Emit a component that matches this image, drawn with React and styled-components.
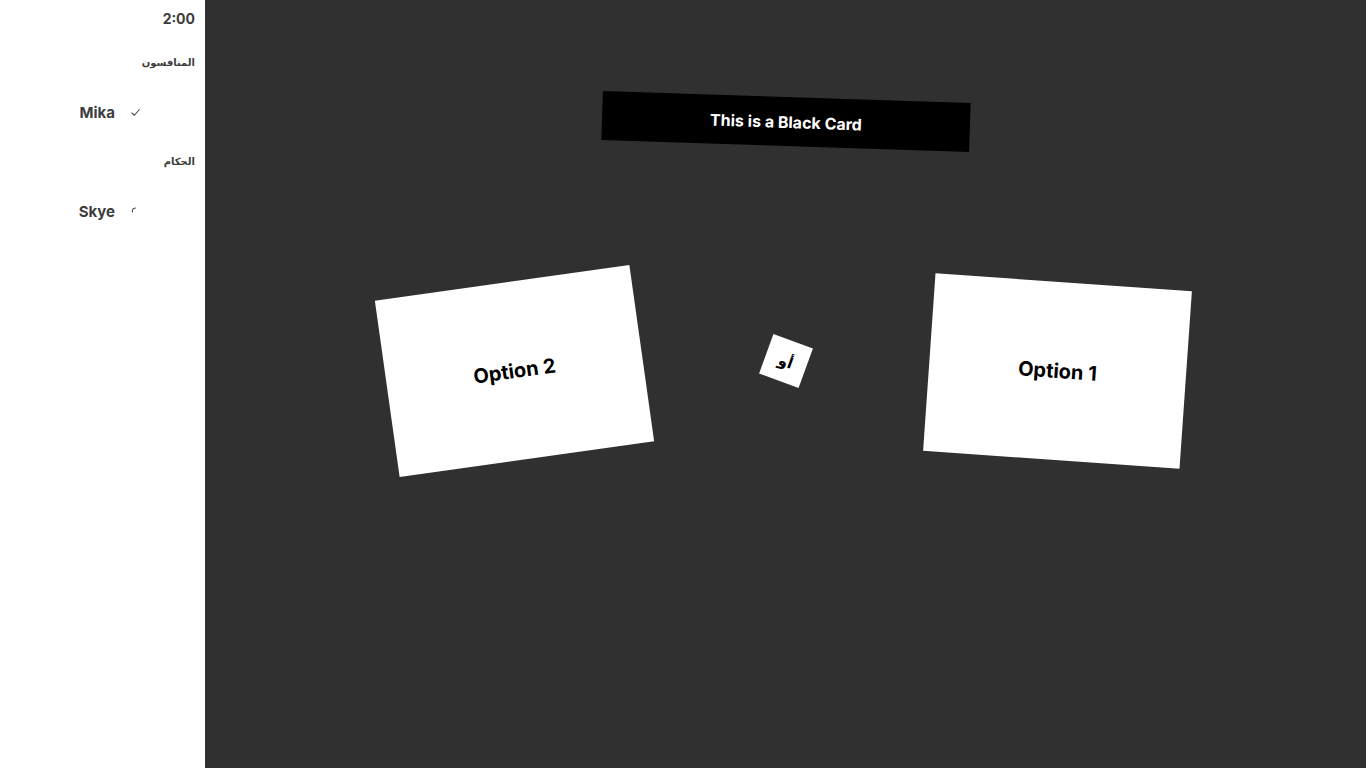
import React from "react";
import styled, { createGlobalStyle } from "styled-components";

const GlobalStyle = createGlobalStyle`
  html, body, #root {
    margin: 0;
    height: 100%;
  }
  body {
    font-family: Inter, "DejaVu Sans", sans-serif;
    overflow: hidden;
  }
`;

const Layout = styled.div`
  display: grid;
  grid-template-columns: 205px 1fr;
  height: 100vh;
`;

const Sidebar = styled.aside`
  background-color: white;
  color: #3d3d3d;
  padding: 10px 10px 0 0;
  display: flex;
  flex-direction: column;
`;

const Timer = styled.div`
  text-align: right;
  font-size: 14px;
  font-weight: 700;
  line-height: 18px;
`;

const SectionTitle = styled.div`
  direction: rtl;
  text-align: right;
  font-size: 10px;
  font-weight: 700;
  line-height: 14px;
  margin-top: ${(p) => p.top}px;
`;

const PlayerRow = styled.div`
  display: flex;
  align-items: center;
  justify-content: flex-end;
  gap: 14px;
  padding-right: 54px;
  margin-top: 33px;
  height: 20px;
`;

const PlayerName = styled.span`
  font-size: 15px;
  font-weight: 700;
`;

const StatusIcon = styled.span`
  width: 12px;
  display: flex;
  justify-content: center;
`;

const Table = styled.main`
  background-color: #303030;
  display: flex;
  flex-direction: column;
  align-items: center;
  padding-top: 97px;
`;

const BlackCard = styled.div`
  width: 368px;
  height: 49px;
  background-color: black;
  color: white;
  display: flex;
  align-items: center;
  justify-content: center;
  font-size: 16px;
  font-weight: 700;
  transform: rotate(1.9deg);
`;

const Choices = styled.div`
  display: flex;
  align-items: center;
  gap: 122px;
  margin-top: 136px;
`;

const WhiteCard = styled.div`
  width: 257px;
  height: 178px;
  background-color: white;
  color: black;
  display: flex;
  align-items: center;
  justify-content: center;
  font-size: 20px;
  font-weight: 700;
  transform: rotate(${(p) => p.tilt}deg);
`;

const OrBadge = styled.div`
  width: 42px;
  height: 42px;
  background-color: white;
  color: black;
  display: flex;
  align-items: center;
  justify-content: center;
  font-size: 15px;
  font-weight: 700;
  direction: rtl;
  transform: translateY(-10px) rotate(20deg);
`;

const Check = () => (
  <svg width="11" height="11" viewBox="0 0 12 12" fill="none">
    <path d="M2 6.5 L4.8 9 L10 3" stroke="#3d3d3d" strokeWidth="1.1" strokeLinecap="round" strokeLinejoin="round" />
  </svg>
);

const Spinner = () => (
  <svg width="11" height="11" viewBox="0 0 12 12" fill="none">
    <path d="M2.5 6.5 A4 4 0 0 1 6 2.2" stroke="#3d3d3d" strokeWidth="1.1" strokeLinecap="round" />
  </svg>
);

export default function App() {
  return (
    <>
      <GlobalStyle />
      <Layout>
        <Sidebar>
          <Timer>2:00</Timer>
          <SectionTitle top={27}>المنافسون</SectionTitle>
          <PlayerRow>
            <PlayerName>Mika</PlayerName>
            <StatusIcon>
              <Check />
            </StatusIcon>
          </PlayerRow>
          <SectionTitle top={32}>الحكام</SectionTitle>
          <PlayerRow>
            <PlayerName>Skye</PlayerName>
            <StatusIcon>
              <Spinner />
            </StatusIcon>
          </PlayerRow>
        </Sidebar>
        <Table>
          <BlackCard>This is a Black Card</BlackCard>
          <Choices>
            <WhiteCard tilt={-8}>Option 2</WhiteCard>
            <OrBadge>أو</OrBadge>
            <WhiteCard tilt={4}>Option 1</WhiteCard>
          </Choices>
        </Table>
      </Layout>
    </>
  );
}
